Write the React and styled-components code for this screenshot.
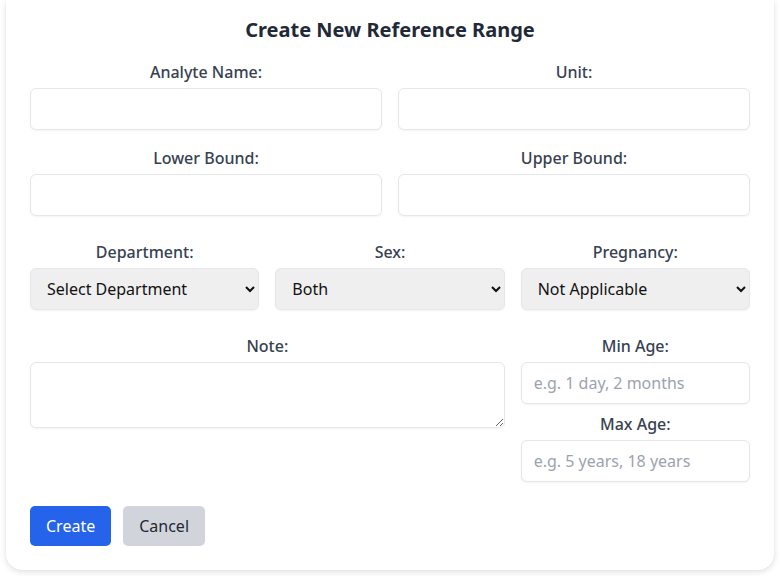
import React from "react";
import styled, { createGlobalStyle } from "styled-components";

const Global = createGlobalStyle`
  * { box-sizing: border-box; }
  html, body { margin: 0; padding: 0; background: #ffffff; }
  body { font-family: "Noto Sans", "Open Sans", sans-serif; }
  #root { padding: 0 6px 6px; }
`;

const Card = styled.form`
  background: #ffffff;
  border-radius: 0 0 16px 16px;
  box-shadow: 0 2px 6px rgba(0, 0, 0, 0.12), 0 0 2px rgba(0, 0, 0, 0.05);
  padding: 16px 24px 24px;
  display: flex;
  flex-direction: column;
`;

const Title = styled.h2`
  margin: 0 0 16px;
  font-size: 20px;
  line-height: 28px;
  font-weight: 700;
  color: #1f2937;
  text-align: center;
`;

const Grid = styled.div`
  display: grid;
  grid-template-columns: repeat(${(p) => p.cols}, 1fr);
  column-gap: 16px;
  row-gap: 16px;
  margin-top: ${(p) => p.mt || 0}px;
`;

const Field = styled.div`
  display: flex;
  flex-direction: column;
  gap: 4px;
  grid-column: span ${(p) => p.span || 1};
`;

const Stack = styled.div`
  display: flex;
  flex-direction: column;
  gap: 8px;
`;

const Label = styled.label`
  font-size: 16px;
  line-height: 24px;
  font-weight: 500;
  color: #374151;
  text-align: center;
`;

const Input = styled.input`
  height: 42px;
  width: 100%;
  padding: 8px 12px;
  font: inherit;
  font-size: 16px;
  line-height: 24px;
  color: #111827;
  background: #ffffff;
  border: 1px solid #e5e7eb;
  border-radius: 6px;
  box-shadow: 0 1px 2px rgba(0, 0, 0, 0.05);
  outline: none;
  &::placeholder { color: #9ca3af; }
`;

const Select = styled.select`
  height: 42px;
  width: 100%;
  padding: 0 12px;
  font: inherit;
  font-size: 16px;
  color: #111111;
  background: #efefef;
  border: 1px solid #e5e7eb;
  border-radius: 6px;
  box-shadow: 0 1px 2px rgba(0, 0, 0, 0.05);
  outline: none;
`;

const TextArea = styled.textarea`
  width: 100%;
  height: 66px;
  padding: 8px 12px;
  font: inherit;
  font-size: 16px;
  line-height: 24px;
  border: 1px solid #e5e7eb;
  border-radius: 6px;
  box-shadow: 0 1px 2px rgba(0, 0, 0, 0.05);
  outline: none;
  display: block;
`;

const Actions = styled.div`
  display: flex;
  gap: 12px;
  margin-top: 24px;
`;

const Button = styled.button`
  height: 40px;
  padding: 0 16px;
  font: inherit;
  font-size: 16px;
  border: none;
  border-radius: 5px;
  cursor: pointer;
  background: ${(p) => (p.primary ? "#2563eb" : "#d1d5db")};
  color: ${(p) => (p.primary ? "#ffffff" : "#1f2937")};
`;

export default function App() {
  return (
    <>
      <Global />
      <Card onSubmit={(e) => e.preventDefault()}>
        <Title>Create New Reference Range</Title>
        <Grid cols={2}>
          <Field>
            <Label>Analyte Name:</Label>
            <Input type="text" />
          </Field>
          <Field>
            <Label>Unit:</Label>
            <Input type="text" />
          </Field>
          <Field>
            <Label>Lower Bound:</Label>
            <Input type="text" />
          </Field>
          <Field>
            <Label>Upper Bound:</Label>
            <Input type="text" />
          </Field>
        </Grid>
        <Grid cols={3} mt={24}>
          <Field>
            <Label>Department:</Label>
            <Select defaultValue="">
              <option value="">Select Department</option>
            </Select>
          </Field>
          <Field>
            <Label>Sex:</Label>
            <Select defaultValue="both">
              <option value="both">Both</option>
              <option value="male">Male</option>
              <option value="female">Female</option>
            </Select>
          </Field>
          <Field>
            <Label>Pregnancy:</Label>
            <Select defaultValue="na">
              <option value="na">Not Applicable</option>
            </Select>
          </Field>
        </Grid>
        <Grid cols={3} mt={24}>
          <Field span={2}>
            <Label>Note:</Label>
            <TextArea rows={2} />
          </Field>
          <Stack>
            <Field>
              <Label>Min Age:</Label>
              <Input type="text" placeholder="e.g. 1 day, 2 months" />
            </Field>
            <Field>
              <Label>Max Age:</Label>
              <Input type="text" placeholder="e.g. 5 years, 18 years" />
            </Field>
          </Stack>
        </Grid>
        <Actions>
          <Button primary type="submit">Create</Button>
          <Button type="button">Cancel</Button>
        </Actions>
      </Card>
    </>
  );
}
